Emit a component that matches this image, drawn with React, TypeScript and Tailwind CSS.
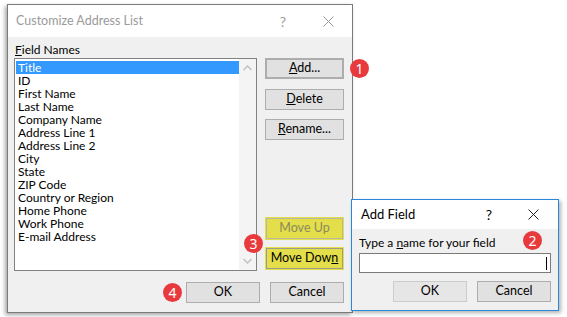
import React from "react";

const FIELDS = [
  "Title", "ID", "First Name", "Last Name", "Company Name", "Address Line 1",
  "Address Line 2", "City", "State", "ZIP Code", "Country or Region",
  "Home Phone", "Work Phone", "E-mail Address",
];

const font = "font-['Lato','Noto_Sans',sans-serif]";

function CloseGlyph({ color }: { color: string }) {
  return (
    <svg width="11" height="11" viewBox="0 0 11 11" className="block">
      <path d="M0.5 0.5 L10.5 10.5 M10.5 0.5 L0.5 10.5" stroke={color} strokeWidth="1" />
    </svg>
  );
}

function Badge({ n, className }: { n: number; className: string }) {
  return (
    <div
      className={`absolute flex h-[19px] w-[19px] items-center justify-center rounded-full bg-[#e83a3d] font-['Noto_Sans',sans-serif] text-[14px] leading-none text-white ${className}`}
    >
      {n}
    </div>
  );
}

function Btn({
  children,
  className = "",
}: {
  children: React.ReactNode;
  className?: string;
}) {
  return (
    <div
      className={`flex h-[21px] items-center justify-center border border-[#adadad] bg-[#e1e1e1] text-[12.5px] text-black ${className}`}
    >
      {children}
    </div>
  );
}

export default function App() {
  return (
    <div className={`relative h-[317px] w-[567px] overflow-hidden bg-white ${font}`}>
      {/* main dialog */}
      <div className="absolute left-[7px] top-[4px] flex h-[309px] w-[346px] flex-col border border-[#7a7a7a] shadow-[-2px_2px_4px_rgba(0,0,0,0.35)]">
        <div className="flex h-[32px] items-center bg-white pl-[8px] pr-[18px] text-[12px] text-[#9a9a9a]">
          <span className="flex-1 text-[12.5px]">Customize Address List</span>
          <span className="mr-[37px] text-[14px]">?</span>
          <CloseGlyph color="#9a9a9a" />
        </div>
        <div className="flex flex-1 flex-col bg-[#f0f0f0] px-[6px] pt-[5px]">
          <div className="flex">
            <div className="flex flex-col">
              <div className="h-[16px] pl-[1px] text-[12px] leading-[16px] text-black">
                <span className="underline">F</span>ield Names
              </div>
              <div className="flex h-[213px] w-[243px] border border-[#828282] bg-white">
                <div className="flex-1 pl-[1px] pt-[2px]">
                  {FIELDS.map((f, i) => (
                    <div
                      key={f}
                      className={`h-[13px] pl-[2px] text-[12px] leading-[13px] ${
                        i === 0 ? "bg-[#3399ff] text-white" : "text-black"
                      }`}
                    >
                      {f}
                    </div>
                  ))}
                </div>
                <div className="flex w-[17px] flex-col items-center justify-between bg-[#f4f4f4] py-[6px]">
                  <svg width="9" height="6" viewBox="0 0 9 6">
                    <path d="M0.5 5 L4.5 1 L8.5 5" fill="none" stroke="#c2c2c2" strokeWidth="1.5" />
                  </svg>
                  <svg width="9" height="6" viewBox="0 0 9 6">
                    <path d="M0.5 1 L4.5 5 L8.5 1" fill="none" stroke="#c2c2c2" strokeWidth="1.5" />
                  </svg>
                </div>
              </div>
            </div>
            <div className="ml-[8px] mt-[16px] flex w-[79px] flex-col">
              <Btn className="border-2 border-[#0078d7]">
                <span><span className="underline">A</span>dd...</span>
              </Btn>
              <Btn className="mt-[10px]">
                <span><span className="underline">D</span>elete</span>
              </Btn>
              <Btn className="mt-[9px]">
                <span><span className="underline">R</span>ename...</span>
              </Btn>
              <div className="mt-[77px] bg-[#e3de4a] p-[1px]">
                <div className="flex h-[21px] items-center justify-center border border-[#b8b8a0] bg-[#e3de4a] text-[12.5px] text-[#8c8a5c]">
                  Move Up
                </div>
              </div>
              <div className="mt-[7px] bg-[#e3de4a] p-[1px]">
                <div className="flex h-[21px] items-center justify-center border border-[#9c9c8a] bg-[#e3de4a] text-[12.5px] text-black">
                  <span>Move Dow<span className="underline">n</span></span>
                </div>
              </div>
            </div>
          </div>
          <div className="mt-[11px] flex justify-end gap-[10px] pr-[2px]">
            <Btn className="w-[74px]">OK</Btn>
            <Btn className="w-[74px]">Cancel</Btn>
          </div>
        </div>
      </div>

      {/* Add Field dialog */}
      <div className="absolute left-[351px] top-[199px] flex h-[112px] w-[208px] flex-col border border-[#2b88d8] shadow-[2px_2px_4px_rgba(0,0,0,0.3)]">
        <div className="flex h-[29px] items-center bg-white pl-[9px] pr-[19px] text-[13px] text-black">
          <span className="flex-1">Add Field</span>
          <span className="mr-[36px] text-[14px]">?</span>
          <CloseGlyph color="#222" />
        </div>
        <div className="flex flex-1 flex-col bg-[#f0f0f0] px-[7px] pt-[6px]">
          <div className="h-[16px] text-[12px] leading-[16px] text-black">
            Type a <span className="underline">n</span>ame for your field
          </div>
          <div className="mt-[2px] flex h-[20px] w-[192px] items-center justify-end border border-[#7a7a7a] bg-white pr-[3px]">
            <div className="h-[13px] w-[1px] bg-black" />
          </div>
          <div className="mt-[8px] flex justify-end gap-[10px]">
            <Btn className="w-[74px] border-[#cccccc] bg-[#e6e6e6] text-[#a0a0a0]">OK</Btn>
            <Btn className="w-[74px]">Cancel</Btn>
          </div>
        </div>
      </div>

      <Badge n={1} className="left-[350px] top-[59px]" />
      <Badge n={2} className="left-[523px] top-[231px]" />
      <Badge n={3} className="left-[244px] top-[234px]" />
      <Badge n={4} className="left-[163px] top-[283px]" />
    </div>
  );
}
